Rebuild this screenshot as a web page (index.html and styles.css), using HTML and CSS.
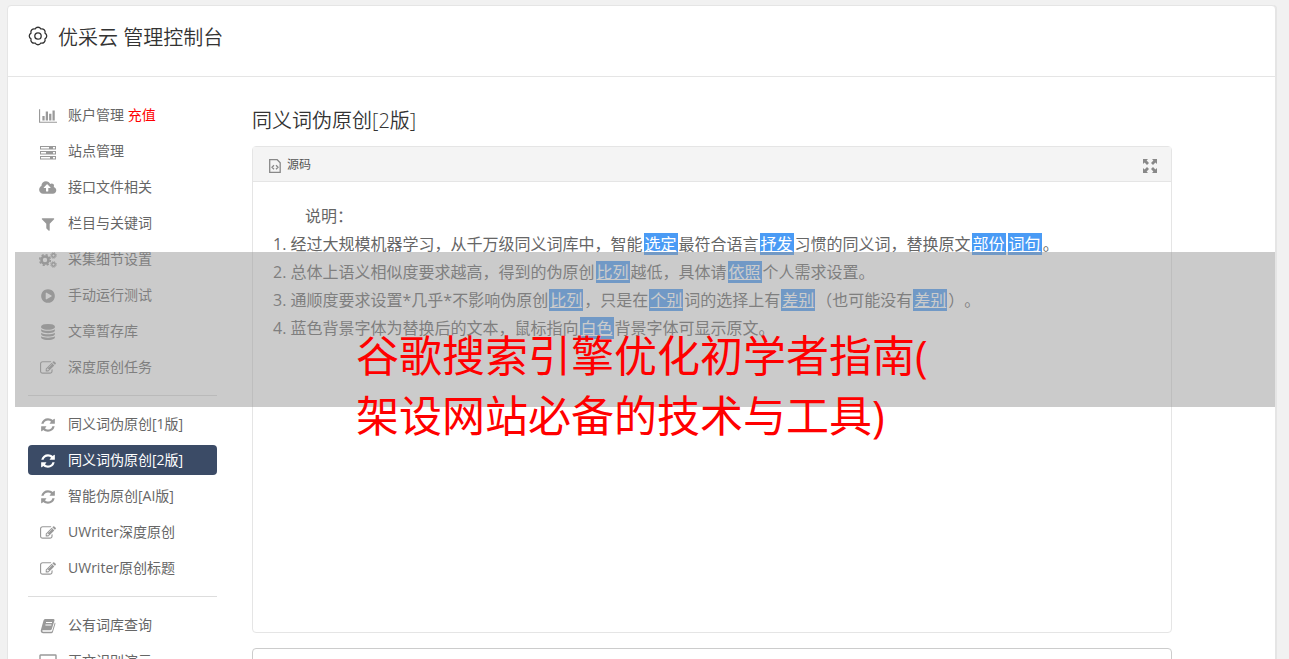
FILE: index.html
```html
<!DOCTYPE html>
<html lang="zh-CN">
<head>
    <meta charset="UTF-8">
    <meta name="viewport" content="width=device-width, initial-scale=1">
    <title>优采云 管理控制台</title>
    <link rel="stylesheet" href="styles.css">
</head>
<body>
    <!-- icon sprite -->
    <svg class="sprite" aria-hidden="true">
        <symbol id="i-gear" viewBox="0 0 20 20">
            <path d="M7.100 3A3.300 3.300 0 0 1 12.900 3A3.300 3.300 0 0 1 17 7.100A3.300 3.300 0 0 1 17 12.900A3.300 3.300 0 0 1 12.900 17A3.300 3.300 0 0 1 7.100 17A3.300 3.300 0 0 1 3 12.900A3.300 3.300 0 0 1 3 7.100A3.300 3.300 0 0 1 7.100 3Z" fill="none" stroke="currentColor" stroke-width="1.300" stroke-linejoin="round"/>
            <circle cx="10" cy="10" r="3.200" fill="none" stroke="currentColor" stroke-width="1.300"/>
        </symbol>
        <symbol id="i-chart" viewBox="0 0 2048 1792">
            <path d="M640 896v512h-256v-512h256zm384-512v1024h-256v-1024h256zm1024 1152v128h-2048v-1536h128v1408h1920zm-640-896v768h-256v-768h256zm384-384v1152h-256v-1152h256z"/>
        </symbol>
        <symbol id="i-server" viewBox="0 0 18 16">
            <path fill-rule="evenodd" d="M1 2h16v3.500H1zM2 3v1.500h8V3zM14 3v1.500h2V3zM1 7h16v3.500H1zM2 8v1.500h5V8zM14 8v1.500h2V8zM1 12h16v3.500H1zM2 13v1.500h9V13zM14 13v1.500h2V13z"/>
        </symbol>
        <symbol id="i-cloud" viewBox="0 0 1856 1792">
            <path d="M1216 864q0-14-9-23l-352-352q-9-9-23-9t-23 9l-351 351q-10 12-10 24 0 14 9 23t23 9h224v352q0 13 9.500 22.500t22.500 9.500h192q13 0 22.500-9.500t9.500-22.500v-352h224q13 0 22.500-9.500t9.500-22.500zm640 288q0 159-112.500 271.500t-271.500 112.500h-1088q-185 0-316.500-131.500t-131.500-316.500q0-130 70-240t188-165q-2-30-2-43 0-212 150-362t362-150q156 0 285.500 87t188.500 231q71-62 166-62 106 0 181 75t75 181q0 76-41 138 130 31 213.500 135.500t83.500 238.500z" fill-rule="evenodd"/>
        </symbol>
        <symbol id="i-filter" viewBox="0 0 1792 1792">
            <path d="M1595 295q17 41-14 70l-493 493v742q0 42-39 59-13 5-25 5-27 0-45-19l-256-256q-19-19-19-45v-486l-493-493q-31-29-14-70 17-39 59-39h1280q42 0 59 39z"/>
        </symbol>
        <symbol id="i-cogs" viewBox="0 0 18 16">
            <g fill="none" stroke="currentColor">
                <circle cx="6" cy="8" r="3.500" stroke-width="2.600"/>
                <circle cx="6" cy="8" r="5.300" stroke-width="1.600" stroke-dasharray="2.200 1.960"/>
                <circle cx="14.500" cy="3.500" r="1.700" stroke-width="1.400"/>
                <circle cx="14.500" cy="3.500" r="2.800" stroke-width="1" stroke-dasharray="1.200 1"/>
                <circle cx="14.500" cy="12.500" r="1.700" stroke-width="1.400"/>
                <circle cx="14.500" cy="12.500" r="2.800" stroke-width="1" stroke-dasharray="1.200 1"/>
            </g>
        </symbol>
        <symbol id="i-play" viewBox="0 0 1792 1792">
            <path d="M896 128q209 0 385.500 103t279.500 279.500 103 385.500-103 385.500-279.500 279.500-385.500 103-385.500-103-279.500-279.500-103-385.500 103-385.500 279.500-279.500 385.500-103zm384 823q32-18 32-55t-32-55l-544-320q-31-19-64-1-32 19-32 56v640q0 37 32 56 16 8 32 8 17 0 32-9z" fill-rule="evenodd"/>
        </symbol>
        <symbol id="i-database" viewBox="0 0 1792 1792">
            <path d="M896 768q237 0 443-43t325-127v170q0 69-103 128t-280 93.500-385 34.500-385-34.500-280-93.500-103-128v-170q119 84 325 127t443 43zm0 768q237 0 443-43t325-127v170q0 69-103 128t-280 93.500-385 34.500-385-34.500-280-93.500-103-128v-170q119 84 325 127t443 43zm0-384q237 0 443-43t325-127v170q0 69-103 128t-280 93.500-385 34.500-385-34.500-280-93.500-103-128v-170q119 84 325 127t443 43zm0-1152q208 0 385 34.500t280 93.500 103 128v128q0 69-103 128t-280 93.500-385 34.500-385-34.500-280-93.500-103-128v-128q0-69 103-128t280-93.500 385-34.500z"/>
        </symbol>
        <symbol id="i-edit" viewBox="0 0 1792 1792">
            <path d="M888 1184l116-116-152-152-116 116v56h96v96h56zm440-720q-16-16-33 1l-350 350q-17 17-1 33t33-1l350-350q17-17 1-33zm80 594v190q0 119-84.500 203.500t-203.500 84.500h-832q-119 0-203.500-84.500t-84.500-203.500v-832q0-119 84.500-203.500t203.500-84.500h832q63 0 117 25 15 7 18 23 3 17-9 29l-49 49q-14 14-32 8-23-6-45-6h-832q-66 0-113 47t-47 113v832q0 66 47 113t113 47h832q66 0 113-47t47-113v-126q0-13 9-22l64-64q15-15 35-7t20 29zm-96-738l288 288-672 672h-288v-288zm444 132l-92 92-288-288 92-92q28-28 68-28t68 28l152 152q28 28 28 68t-28 68z"/>
        </symbol>
        <symbol id="i-refresh" viewBox="0 0 1792 1792">
            <path d="M1639 1056q0 5-1 7-64 268-268 434.500t-478 166.500q-146 0-282.500-55t-243.500-157l-129 129q-19 19-45 19t-45-19-19-45v-448q0-26 19-45t45-19h448q26 0 45 19t19 45-19 45l-137 137q71 66 161 102t187 36q134 0 250-65t186-179q11-17 53-117 8-23 30-23h192q13 0 22.500 9.500t9.500 22.500zm25-800v448q0 26-19 45t-45 19h-448q-26 0-45-19t-19-45 19-45l138-138q-148-137-349-137-134 0-250 65t-186 179q-11 17-53 117-8 23-30 23h-199q-13 0-22.500-9.500t-9.500-22.500v-7q65-268 270-434.500t480-166.500q146 0 284 55.500t245 156.500l130-129q19-19 45-19t45 19 19 45z"/>
        </symbol>
        <symbol id="i-book" viewBox="0 0 16 16">
            <path fill-rule="evenodd" d="M5 1h8.500q1.300.2 1 1.500L11.800 11q-.4 1.200-1.600 1.200H3q-1 .2-.8.900.2.600 1 .600h8q.8 0 1-.8L14.800 4.500q.8.400.6 1.300L12.900 14q-.4 1.200-1.600 1.200H3Q1.200 15 .8 13.400q-.2-.9.200-1.800L3.500 2.500Q4 1 5 1zM6 4v1h6V4zM5.400 6.500v1h6v-1z"/>
        </symbol>
        <symbol id="i-screen" viewBox="0 0 18 16">
            <path fill="none" stroke="currentColor" stroke-width="1.400" d="M1.500 1h15q.5 0 .5.500v10q0 .5-.5.500h-15q-.5 0-.5-.5v-10q0-.5.500-.5zM5 15h8M9 12v3"/>
        </symbol>
        <symbol id="i-source" viewBox="0 0 12 14">
            <path fill="none" stroke="currentColor" stroke-width="1.300" d="M.7.7h7.500l3 3v9.600H.7zM5 6.300L3 8.300l2 2M7 6.300l2 2-2 2"/>
        </symbol>
        <symbol id="i-expand" viewBox="0 0 14 14">
            <path d="M0 0h5L3.600 1.600l2.400 2.400-2 2-2.400-2.400L0 5zM14 0v5l-1.600-1.400L10 6 8 4l2.400-2.400L9 0zM0 14V9l1.600 1.400L4 8l2 2-2.400 2.400L5 14zM14 14H9l1.400-1.600L8 10l2-2 2.400 2.400L14 9z"/>
        </symbol>
    </svg>

    <div class="card">
        <header class="card-header">
            <svg class="logo"><use href="#i-gear"/></svg>
            <h1>优采云 管理控制台</h1>
        </header>

        <div class="card-body">
            <nav class="sidebar">
                <ul class="menu">
                    <li><a href="#"><svg class="icon"><use href="#i-chart"/></svg><span>账户管理 <span class="recharge">充值</span></span></a></li>
                    <li><a href="#"><svg class="icon"><use href="#i-server"/></svg>站点管理</a></li>
                    <li><a href="#"><svg class="icon"><use href="#i-cloud"/></svg>接口文件相关</a></li>
                    <li><a href="#"><svg class="icon"><use href="#i-filter"/></svg>栏目与关键词</a></li>
                    <li><a href="#"><svg class="icon"><use href="#i-cogs"/></svg>采集细节设置</a></li>
                    <li><a href="#"><svg class="icon"><use href="#i-play"/></svg>手动运行测试</a></li>
                    <li><a href="#"><svg class="icon"><use href="#i-database"/></svg>文章暂存库</a></li>
                    <li><a href="#"><svg class="icon"><use href="#i-edit"/></svg>深度原创任务</a></li>
                    <li class="divider"></li>
                    <li><a href="#"><svg class="icon"><use href="#i-refresh"/></svg>同义词伪原创[1版]</a></li>
                    <li><a href="#" class="active"><svg class="icon"><use href="#i-refresh"/></svg>同义词伪原创[2版]</a></li>
                    <li><a href="#"><svg class="icon"><use href="#i-refresh"/></svg>智能伪原创[AI版]</a></li>
                    <li><a href="#"><svg class="icon"><use href="#i-edit"/></svg>UWriter深度原创</a></li>
                    <li><a href="#"><svg class="icon"><use href="#i-edit"/></svg>UWriter原创标题</a></li>
                    <li class="divider"></li>
                    <li><a href="#"><svg class="icon"><use href="#i-book"/></svg>公有词库查询</a></li>
                    <li><a href="#"><svg class="icon"><use href="#i-screen"/></svg>正文识别演示</a></li>
                </ul>
            </nav>

            <main class="content">
                <h2>同义词伪原创[2版]</h2>

                <div class="editor">
                    <div class="toolbar">
                        <button type="button" class="tool"><svg class="icon-source"><use href="#i-source"/></svg>源码</button>
                        <button type="button" class="tool" aria-label="全屏"><svg class="icon-expand"><use href="#i-expand"/></svg></button>
                    </div>
                    <div class="editor-body">
                        <p>说明：</p>
                        <ol>
                            <li>经过大规模机器学习，从千万级同义词库中，智能<u>选定</u>最符合语言<u>抒发</u>习惯的同义词，替换原文<u>部份</u><u>词句</u>。</li>
                            <li>总体上语义相似度要求越高，得到的伪原创<u>比列</u>越低，具体请<u>依照</u>个人需求设置。</li>
                            <li>通顺度要求设置*几乎*不影响伪原创<u>比列</u>，只是在<u>个别</u>词的选择上有<u>差别</u>（也可能没有<u>差别</u>）。</li>
                            <li>蓝色背景字体为替换后的文本，鼠标指向<u>白色</u>背景字体可显示原文。</li>
                        </ol>
                    </div>
                </div>

                <textarea class="source-text" aria-label="原文"></textarea>
            </main>
        </div>
    </div>

    <div class="banner">
        <p>谷歌搜索引擎优化初学者指南(<br>架设网站必备的技术与工具)</p>
    </div>
</body>
</html>
```

FILE: styles.css
```css
* {
    box-sizing: border-box;
}

body {
    position: relative;
    margin: 0;
    padding: 5px 13px 0 7px;
    background-color: #f1f1f1;
    color: #666;
    font-family: "Open Sans", "Noto Sans CJK SC", sans-serif;
    font-size: 14px;
    text-spacing-trim: space-all;
}

h1, h2, p, ul, ol {
    margin: 0;
    padding: 0;
}

h1, h2 {
    color: #333;
    font-size: 20px;
    font-weight: 350;
    line-height: 30px;
}

svg {
    fill: currentColor;
    flex: none;
}

.sprite {
    display: none;
}

.card {
    background-color: #fff;
    border: 1px solid #e5e5e5;
    border-radius: 4px;
    box-shadow: 1px 0 0 #e5e5e5;
}

.card-header {
    display: flex;
    gap: 10px;
    padding: 17px 20px 23px;
    border-bottom: 1px solid #e5e5e5;
    color: #333;
}

.logo {
    width: 20px;
    height: 20px;
    margin-top: 3px;
}

.card-body {
    display: grid;
    grid-template-columns: 189px 1fr;
    gap: 35px;
    padding: 23px 20px 40px;
}

/* sidebar */
.menu {
    display: flex;
    flex-direction: column;
    gap: 6px;
    list-style: none;
}

.menu a {
    display: flex;
    align-items: center;
    gap: 11px;
    height: 30px;
    padding: 0 11px 2px;
    border-radius: 4px;
    color: #666;
    text-decoration: none;
}

.menu a.active {
    background-color: #3b4b66;
    color: #fff;
}

.menu .divider {
    height: 1px;
    margin: 7px 0;
    background-color: #ddd;
}

.icon {
    width: 18px;
    height: 16px;
    margin-top: 3px;
    color: #999;
}

.active .icon {
    color: #fff;
}

.recharge {
    color: #f00;
}

/* editor */
.content {
    max-width: 920px;
    padding-top: 6px;
}

.editor {
    margin-top: 10px;
    border: 1px solid #e5e5e5;
    border-radius: 4px;
}

.toolbar {
    display: flex;
    justify-content: space-between;
    padding: 0 14px;
    background-color: #f4f4f4;
    border-bottom: 1px solid #e5e5e5;
}

.tool {
    display: flex;
    align-items: center;
    gap: 6px;
    height: 34px;
    padding: 0 0 0 2px;
    border: none;
    background: none;
    color: #555;
    font: inherit;
    font-size: 12px;
    cursor: pointer;
}

.tool svg {
    margin-top: 3px;
    color: #888;
}

.icon-source {
    width: 12px;
    height: 14px;
}

.icon-expand {
    width: 14px;
    height: 14px;
}

.editor-body {
    min-height: 450px;
    padding: 20px;
    font-size: 16px;
    line-height: 28px;
}

.editor-body p {
    text-indent: 2em;
}

.editor-body ol {
    list-style: decimal inside;
}

.editor-body u {
    margin: 0 1px;
    padding: 0 1px;
    background-color: #4a9bf5;
    color: #fff;
}

.source-text {
    display: block;
    width: 100%;
    height: 200px;
    margin-top: 15px;
    border: 1px solid #ccc;
    border-radius: 4px;
    resize: vertical;
}

/* caption strip laid over the page */
.banner {
    position: absolute;
    top: 252px;
    left: 15px;
    right: 14px;
    height: 155px;
    padding: 74px 0 0 341px;
    background-color: rgba(151, 151, 151, 0.5);
    color: #f00;
    font-size: 43px;
    line-height: 60px;
    pointer-events: none;
}
```
